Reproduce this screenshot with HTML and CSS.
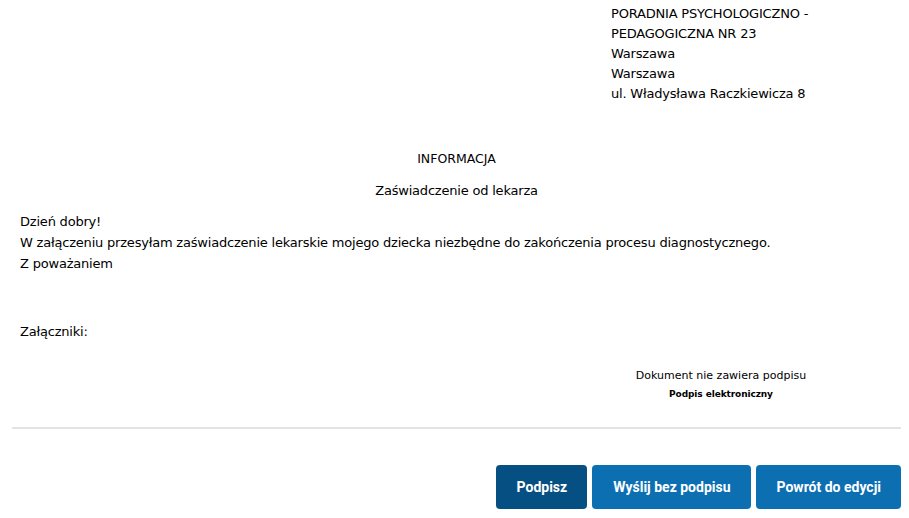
FILE: index.html
```html
<!DOCTYPE html>
<html lang="pl">
<head>
    <meta charset="UTF-8">
    <meta name="viewport" content="width=device-width, initial-scale=1.0">
    <title>Informacja</title>
    <link rel="stylesheet" href="styles.css">
</head>
<body>
    <div class="document">
        <div class="recipient">
            <div>PORADNIA PSYCHOLOGICZNO - PEDAGOGICZNA NR 23</div>
            <div>Warszawa</div>
            <div>Warszawa</div>
            <div>ul. Władysława Raczkiewicza 8</div>
        </div>

        <div class="doc-type">INFORMACJA</div>
        <div class="doc-subject">Zaświadczenie od lekarza</div>

        <div class="doc-body">
            <div>Dzień dobry!</div>
            <div>W załączeniu przesyłam zaświadczenie lekarskie mojego dziecka niezbędne do zakończenia procesu diagnostycznego.</div>
            <div>Z poważaniem</div>
        </div>

        <div class="attachments">Załączniki:</div>

        <div class="signature">
            <div class="signature-status">Dokument nie zawiera podpisu</div>
            <div class="signature-label">Podpis elektroniczny</div>
        </div>
    </div>

    <div class="actions">
        <button type="button" class="btn btn-dark">Podpisz</button>
        <button type="button" class="btn">Wyślij bez podpisu</button>
        <button type="button" class="btn">Powrót do edycji</button>
    </div>
</body>
</html>
```

FILE: styles.css
```css
/* Podglad dokumentu */
body {
    font-family: "DejaVu Sans", Verdana, sans-serif;
    font-size: 13px;
    letter-spacing: -0.2px;
    color: #000;
    background-color: #fff;
    margin: 0;
    padding: 0;
}

.document {
    padding: 4px 16px 0 20px;
}

.recipient {
    margin-left: 591px;
    width: 220px;
    line-height: 20px;
}

.doc-type {
    margin-top: 45px;
    text-align: center;
    font-size: 12.5px;
    letter-spacing: 0;
    line-height: 20px;
}

.doc-subject {
    margin-top: 12px;
    text-align: center;
    line-height: 20px;
}

.doc-body {
    margin-top: 10px;
    line-height: 21px;
}

.attachments {
    margin-top: 48px;
    line-height: 20px;
}

.signature {
    margin-top: 25px;
    margin-left: 591px;
    width: 220px;
    text-align: center;
    letter-spacing: 0;
}

.signature-status {
    font-size: 11px;
    line-height: 18px;
}

.signature-label {
    font-size: 9px;
    font-weight: bold;
    letter-spacing: -0.1px;
    line-height: 18px;
}

.actions {
    margin: 24px 8px 0 12px;
    padding-top: 36px;
    border-top: 2px solid #e3e3e3;
    display: flex;
    justify-content: flex-end;
    gap: 5px;
}

.btn {
    font-family: Roboto, Arial, sans-serif;
    font-size: 14px;
    font-weight: bold;
    letter-spacing: 0;
    color: white;
    background-color: #0b6fb2;
    border: none;
    border-radius: 4px;
    height: 44px;
    padding: 0 20px 0 21px;
    cursor: pointer;
}

.btn-dark {
    background-color: #064f82;
}

.btn:hover {
    background-color: #085a94;
}
```
